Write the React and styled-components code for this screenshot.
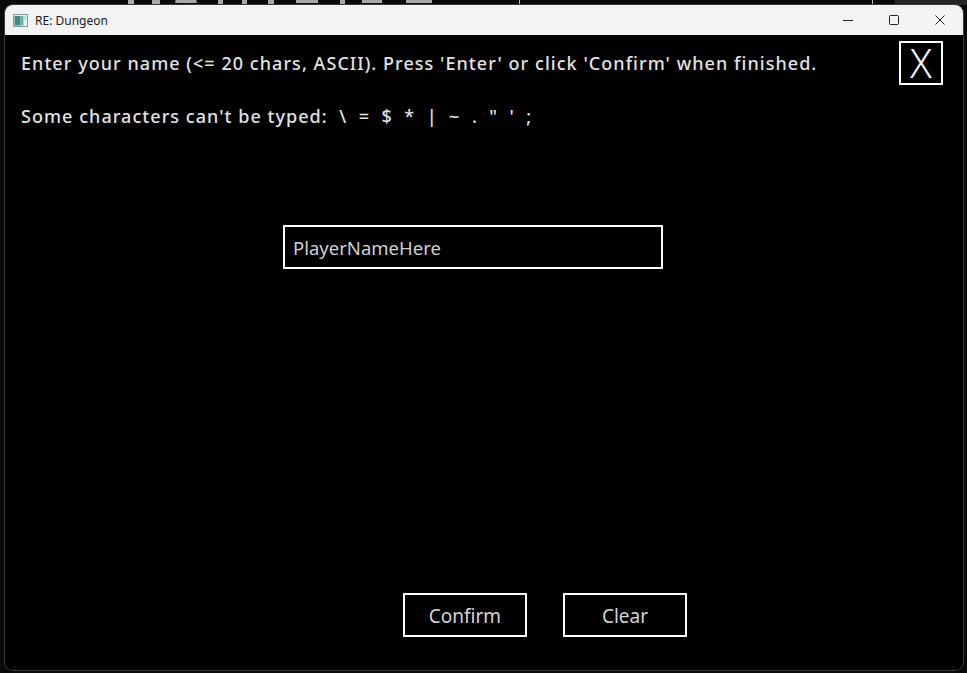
import React from 'react'
import styled, { createGlobalStyle } from 'styled-components'

const GlobalStyle = createGlobalStyle`
  html, body {
    margin: 0;
    padding: 0;
    background: #0a0a0a;
    overflow: hidden;
  }
  * {
    box-sizing: border-box;
  }
`

const Desktop = styled.div`
  width: 967px;
  height: 673px;
  display: flex;
  flex-direction: column;
  background: #0a0a0a;
`

const Backdrop = styled.div`
  height: 5px;
  flex: none;
  display: flex;
  align-items: flex-end;
  overflow: hidden;
`

const BackdropLogo = styled.svg`
  margin-left: 100px;
  flex: none;
`

const BackdropBox = styled.div`
  margin-left: 69px;
  width: 354px;
  height: 20px;
  border: 1px solid #bdbdbd;
  border-bottom: none;
`

const BackdropPanel = styled.div`
  margin-left: 22px;
  flex: 1;
  height: 20px;
  background: #262626;
`

const Window = styled.div`
  margin-left: 5px;
  width: 958px;
  height: 665px;
  display: flex;
  flex-direction: column;
  border-radius: 8px;
  overflow: hidden;
  box-shadow: 0 0 0 1px #3a3a3a;
  background: #000;
`

const TitleBar = styled.div`
  height: 30px;
  flex: none;
  display: flex;
  align-items: center;
  background: #f3f3f3;
  font-family: "Noto Sans", "Liberation Sans", sans-serif;
  font-size: 12px;
  color: #1a1a1a;
`

const AppIcon = styled.svg`
  margin-left: 8px;
  margin-right: 7px;
`

const TitleText = styled.span`
  flex: 1;
`

const CaptionButton = styled.div`
  width: 46px;
  height: 30px;
  display: flex;
  align-items: center;
  justify-content: center;
`

const Content = styled.div`
  flex: 1;
  display: flex;
  flex-direction: column;
  background: #000;
  font-family: "Noto Sans", "Open Sans", sans-serif;
`

const Header = styled.div`
  display: flex;
  justify-content: space-between;
  align-items: flex-start;
  padding: 0 20px 0 16px;
`

const Prompt = styled.div`
  padding-top: 15px;
  display: flex;
  flex-direction: column;
  gap: 27px;
`

const PromptLine = styled.div`
  font-size: 18px;
  line-height: 26px;
  font-weight: 500;
  letter-spacing: 1.05px;
  color: #e2e2e2;
  white-space: pre;
`

const CloseBox = styled.div`
  margin-top: 6px;
  width: 44px;
  height: 44px;
  border: 2px solid #fff;
  display: flex;
  align-items: center;
  justify-content: center;
  font-size: 40px;
  font-weight: 300;
  line-height: 1;
  color: #f4f4f4;
`

const NameField = styled.div`
  margin: 96px 0 0 278px;
  width: 380px;
  height: 44px;
  border: 2px solid #fff;
  display: flex;
  align-items: center;
  padding-left: 8px;
  font-size: 18.5px;
  color: #cfcfcf;
`

const Spacer = styled.div`
  flex: 1;
`

const ButtonRow = styled.div`
  display: flex;
  gap: 36px;
  margin: 0 0 33px 398px;
`

const ActionButton = styled.div`
  width: 124px;
  height: 44px;
  border: 2px solid #fff;
  display: flex;
  align-items: center;
  justify-content: center;
  padding-top: 1px;
  font-size: 19px;
  color: #d4d4d4;
`

export default function App() {
  return (
    <>
      <GlobalStyle />
      <Desktop>
        <Backdrop>
          <BackdropLogo width="350" height="5" viewBox="0 0 350 5">
            <g fill="#a8a8a8">
              <rect x="28" y="0" width="6" height="5" />
              <rect x="52" y="0" width="8" height="4" />
              <rect x="75" y="0" width="22" height="3" rx="1.5" />
              <rect x="118" y="0" width="5" height="5" />
              <rect x="142" y="0" width="5" height="4" />
              <rect x="168" y="0" width="6" height="5" />
              <rect x="196" y="0" width="22" height="3" />
              <rect x="240" y="0" width="5" height="5" />
              <rect x="262" y="0" width="20" height="3" />
              <rect x="306" y="0" width="26" height="3" />
            </g>
          </BackdropLogo>
          <BackdropBox />
          <BackdropPanel />
        </Backdrop>
        <Window>
          <TitleBar>
            <AppIcon width="15" height="13" viewBox="0 0 15 13">
              <rect x="0.5" y="0.5" width="14" height="12" fill="#e9eef0" stroke="#8a9aa3" />
              <rect x="1.5" y="2" width="6" height="9.5" fill="#3d8a8a" />
              <rect x="7.5" y="2" width="3" height="9.5" fill="#6fb0a4" />
              <rect x="10.5" y="2" width="3" height="4" fill="#c9d6dd" />
            </AppIcon>
            <TitleText>RE: Dungeon</TitleText>
            <CaptionButton>
              <svg width="10" height="10" viewBox="0 0 10 10">
                <line x1="0" y1="5.5" x2="10" y2="5.5" stroke="#222" strokeWidth="1" />
              </svg>
            </CaptionButton>
            <CaptionButton>
              <svg width="10" height="10" viewBox="0 0 10 10">
                <rect x="0.5" y="0.5" width="9" height="9" rx="1" fill="none" stroke="#222" strokeWidth="1" />
              </svg>
            </CaptionButton>
            <CaptionButton>
              <svg width="10" height="10" viewBox="0 0 10 10">
                <path d="M0.5 0.5 L9.5 9.5 M9.5 0.5 L0.5 9.5" stroke="#222" strokeWidth="1" />
              </svg>
            </CaptionButton>
          </TitleBar>
          <Content>
            <Header>
              <Prompt>
                <PromptLine>Enter your name (&lt;= 20 chars, ASCII). Press 'Enter' or click 'Confirm' when finished.</PromptLine>
                <PromptLine>{'Some characters can\'t be typed:  \\  =  $  *  |  ~  .  "  \'  ;'}</PromptLine>
              </Prompt>
              <CloseBox>X</CloseBox>
            </Header>
            <NameField>PlayerNameHere</NameField>
            <Spacer />
            <ButtonRow>
              <ActionButton>Confirm</ActionButton>
              <ActionButton>Clear</ActionButton>
            </ButtonRow>
          </Content>
        </Window>
      </Desktop>
    </>
  )
}
